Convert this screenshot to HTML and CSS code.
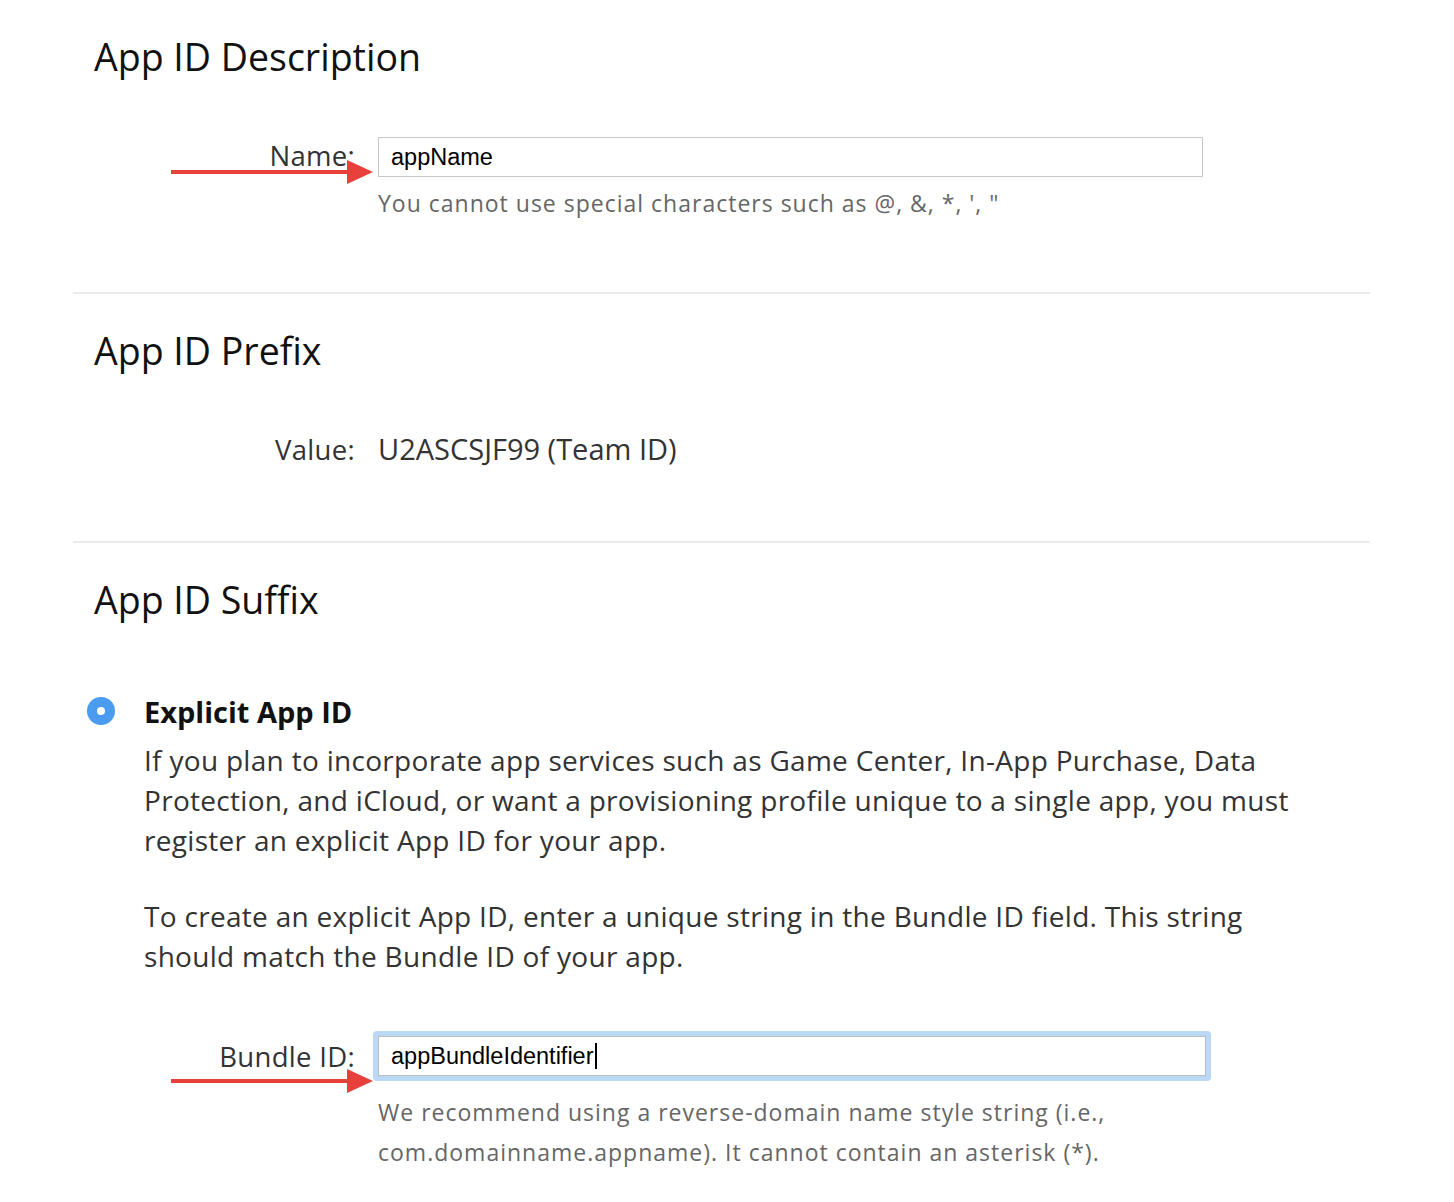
FILE: index.html
```html
<!DOCTYPE html>
<html>
<head>
<meta charset="utf-8">
<link rel="stylesheet" href="styles.css">
</head>
<body>
<div class="page">
  <section class="section s1">
    <h2 class="heading">App ID Description</h2>
    <div class="row row-name">
      <label class="label">Name:</label>
      <div class="field">
        <div class="input">appName</div>
        <p class="help">You cannot use special characters such as @, &amp;, *, ', "</p>
      </div>
      <svg class="arrow" width="210" height="28" viewBox="0 0 210 28"><line x1="0" y1="14" x2="182" y2="14" stroke="#e8413b" stroke-width="4"/><polygon points="176,2 202,14 176,26" fill="#e8413b"/></svg>
    </div>
  </section>
  <hr class="divider">
  <section class="section s2">
    <h2 class="heading">App ID Prefix</h2>
    <div class="row row-value">
      <span class="label">Value:</span>
      <span class="value">U2ASCSJF99 (Team ID)</span>
    </div>
  </section>
  <hr class="divider">
  <section class="section s3">
    <h2 class="heading">App ID Suffix</h2>
    <div class="option">
      <span class="radio"><span class="dot"></span></span>
      <div class="option-body">
        <h3 class="option-title">Explicit App ID</h3>
        <p class="para">If you plan to incorporate app services such as Game Center, In-App Purchase, Data Protection, and iCloud, or want a provisioning profile unique to a single app, you must register an explicit App ID for your app.</p>
        <p class="para">To create an explicit App ID, enter a unique string in the Bundle ID field. This string should match the Bundle ID of your app.</p>
      </div>
    </div>
    <div class="row row-bundle">
      <label class="label">Bundle ID:</label>
      <div class="field">
        <div class="focus"><div class="input">appBundleIdentifier<span class="caret"></span></div></div>
        <p class="help">We recommend using a reverse-domain name style string (i.e., com.domainname.appname). It cannot contain an asterisk (*).</p>
      </div>
      <svg class="arrow" width="210" height="28" viewBox="0 0 210 28"><line x1="0" y1="14" x2="182" y2="14" stroke="#e8413b" stroke-width="4"/><polygon points="176,2 202,14 176,26" fill="#e8413b"/></svg>
    </div>
  </section>
</div>
</body>
</html>
```
FILE: styles.css
```css
* { box-sizing: border-box; }
html, body { margin: 0; padding: 0; background: #fff; }
body { font-family: "Open Sans", "Noto Sans", sans-serif; color: #333; }
.page { width: 1454px; padding: 0 84px 0 73px; }
.section { padding-left: 21px; }
.heading { margin: 0; font-weight: 400; font-size: 37.5px; line-height: 46px; color: #111; }
.s1 { padding-top: 34px; padding-bottom: 69px; }
.s2 { padding-top: 34px; padding-bottom: 73px; }
.s3 { padding-top: 34px; padding-bottom: 20px; }
.divider { margin: 0; border: 0; border-top: 2px solid #ebebeb; }
.row { display: flex; position: relative; margin-left: -94px; }
.label { width: 355px; text-align: right; font-size: 27.5px; letter-spacing: 0.3px; color: #333; flex: none; }
.field { margin-left: 23px; width: 825px; }
.input { height: 40px; border: 1px solid #c8c8c8; background: #fff; font-family: "Liberation Sans", Arial, sans-serif; font-size: 23.5px; color: #000; padding: 0 12px; line-height: 38px; display: flex; align-items: center; }
.help { margin: 6px 0 0; font-size: 23px; line-height: 40px; color: #666; letter-spacing: 1px; }
.row-name { margin-top: 57px; }
.row-name .label { line-height: 38px; }
.arrow { position: absolute; left: 171px; top: 21px; }
.row-value { margin-top: 57px; align-items: baseline; }
.row-value .label { line-height: 36px; }
.value { margin-left: 23px; font-size: 29px; line-height: 36px; color: #333; }
.option { display: flex; margin-left: -7px; margin-top: 69px; }
.radio { width: 28px; height: 28px; border-radius: 50%; background: #4b9bf0; display: flex; align-items: center; justify-content: center; flex: none; margin-top: 5px; }
.dot { width: 8px; height: 8px; border-radius: 50%; background: #fff; }
.option-body { margin-left: 29px; width: 1180px; }
.option-title { margin: 0; font-size: 29px; font-weight: 700; color: #111; line-height: 40px; }
.para { margin: 8px 0 36px; font-size: 28px; letter-spacing: 0.3px; line-height: 40px; color: #333; }
.para + .para { margin-top: 0; margin-bottom: 0; }
.row-bundle { margin-top: 55px; }
.row-bundle .label { line-height: 52px; }
.row-bundle .field { margin-left: 18px; width: 838px; }
.focus { border: 5px solid #bcd8f7; border-radius: 4px; }
.focus .input { border-color: #bdbdbd; }
.row-bundle .help { margin-left: 5px; margin-top: 11px; }
.row-bundle .arrow { top: 36px; }
.caret { display: inline-block; width: 2px; height: 26px; background: #000; margin-left: 1px; }
```
